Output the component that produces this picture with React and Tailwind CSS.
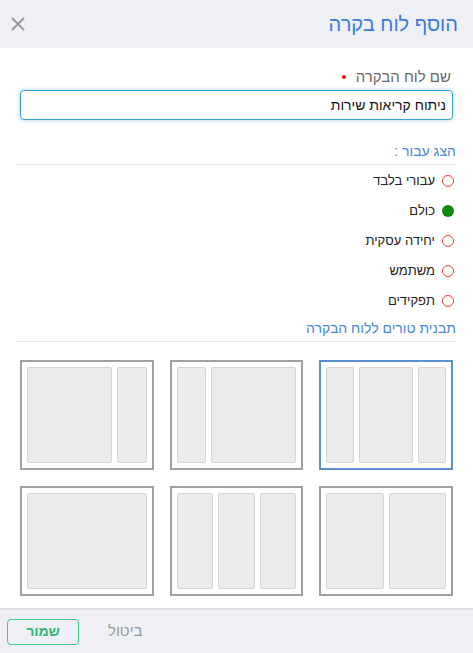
import React from "react";

const font = { fontFamily: '"Liberation Sans", Arial, "DejaVu Sans", sans-serif' };

function Panel({ grow }) {
  return (
    <div
      className="h-full rounded-[2px] border border-[#d5d5d5] bg-[#ebebeb]"
      style={{ flexGrow: grow, flexBasis: 0 }}
    />
  );
}

function Card({ cols, selected }) {
  return (
    <div
      className={
        "flex h-[110px] gap-[5px] border-2 p-[5px] " +
        (selected ? "border-[#5a90cc]" : "border-[#a0a0a0]")
      }
    >
      {cols.map((g, i) => (
        <Panel key={i} grow={g} />
      ))}
    </div>
  );
}

function Radio({ label, checked }) {
  return (
    <div className="flex h-[30px] items-center gap-[7px] pr-[2px]">
      {checked ? (
        <span className="block h-[12px] w-[12px] rounded-full bg-[#0f8a0f]" />
      ) : (
        <span className="block h-[12px] w-[12px] rounded-full border border-[#ee3b3b] bg-white" />
      )}
      <span className="text-[13px] text-[#222]">{label}</span>
    </div>
  );
}

export default function App() {
  return (
    <div dir="rtl" style={font} className="flex h-[653px] w-[473px] flex-col overflow-hidden bg-white">
      <div className="flex h-[48px] shrink-0 items-center justify-between bg-[#eef0f5] pl-[11px] pr-[15px]">
        <span className="text-[20px] text-[#3b7be0]">הוסף לוח בקרה</span>
        <svg width="14" height="14" viewBox="0 0 14 14" className="mt-[-1px]">
          <path d="M1 1 L13 13 M13 1 L1 13" stroke="#9a9a9a" strokeWidth="2" />
        </svg>
      </div>

      <div className="flex-1 px-[17px] pt-[20px]">
        <div className="flex items-center gap-[10px] pr-[5px] text-[15px] leading-[18px] text-[#666]">
          <span>שם לוח הבקרה</span>
          <span className="block h-[4px] w-[4px] rounded-full bg-[#e00]" />
        </div>
        <div className="mx-[3px] mt-[4px] flex h-[30px] items-center rounded-[4px] border border-[#3aa0e0] bg-white px-[6px] text-[14px] text-[#111] shadow-[0_0_4px_rgba(58,160,224,0.45)]">
          ניתוח קריאות שירות
        </div>

        <div className="mt-[22px] pb-[4px] text-[14px] leading-[18px] text-[#4a86e0]">הצג עבור :</div>
        <div className="h-px bg-[#e3e3e3]" />
        <div className="pt-[1px]">
          <Radio label="עבורי בלבד" />
          <Radio label="כולם" checked />
          <Radio label="יחידה עסקית" />
          <Radio label="משתמש" />
          <Radio label="תפקידים" />
        </div>
        <div className="mt-[3px] pb-[4px] text-[14px] leading-[18px] text-[#4a86e0]">תבנית טורים ללוח הבקרה</div>
        <div className="h-px bg-[#e3e3e3]" />

        <div className="mx-[3px] mt-[18px] grid grid-cols-3 gap-x-[16px] gap-y-[16px]">
          <Card cols={[1, 2, 1]} selected />
          <Card cols={[3, 1]} />
          <Card cols={[1, 3]} />
          <Card cols={[1, 1]} />
          <Card cols={[1, 1, 1]} />
          <Card cols={[1]} />
        </div>
      </div>

      <div className="flex h-[45px] shrink-0 items-center justify-end gap-[29px] border-t-2 border-[#e0e1e6] bg-[#eef0f5] pl-[7px]">
        <span className="text-[15px] text-[#9a9a9a]">ביטול</span>
        <div className="flex h-[26px] w-[72px] items-center justify-center rounded-[4px] border border-[#3ccb8a] text-[14px] font-bold text-[#2eb67a]">
          שמור
        </div>
      </div>
    </div>
  );
}
